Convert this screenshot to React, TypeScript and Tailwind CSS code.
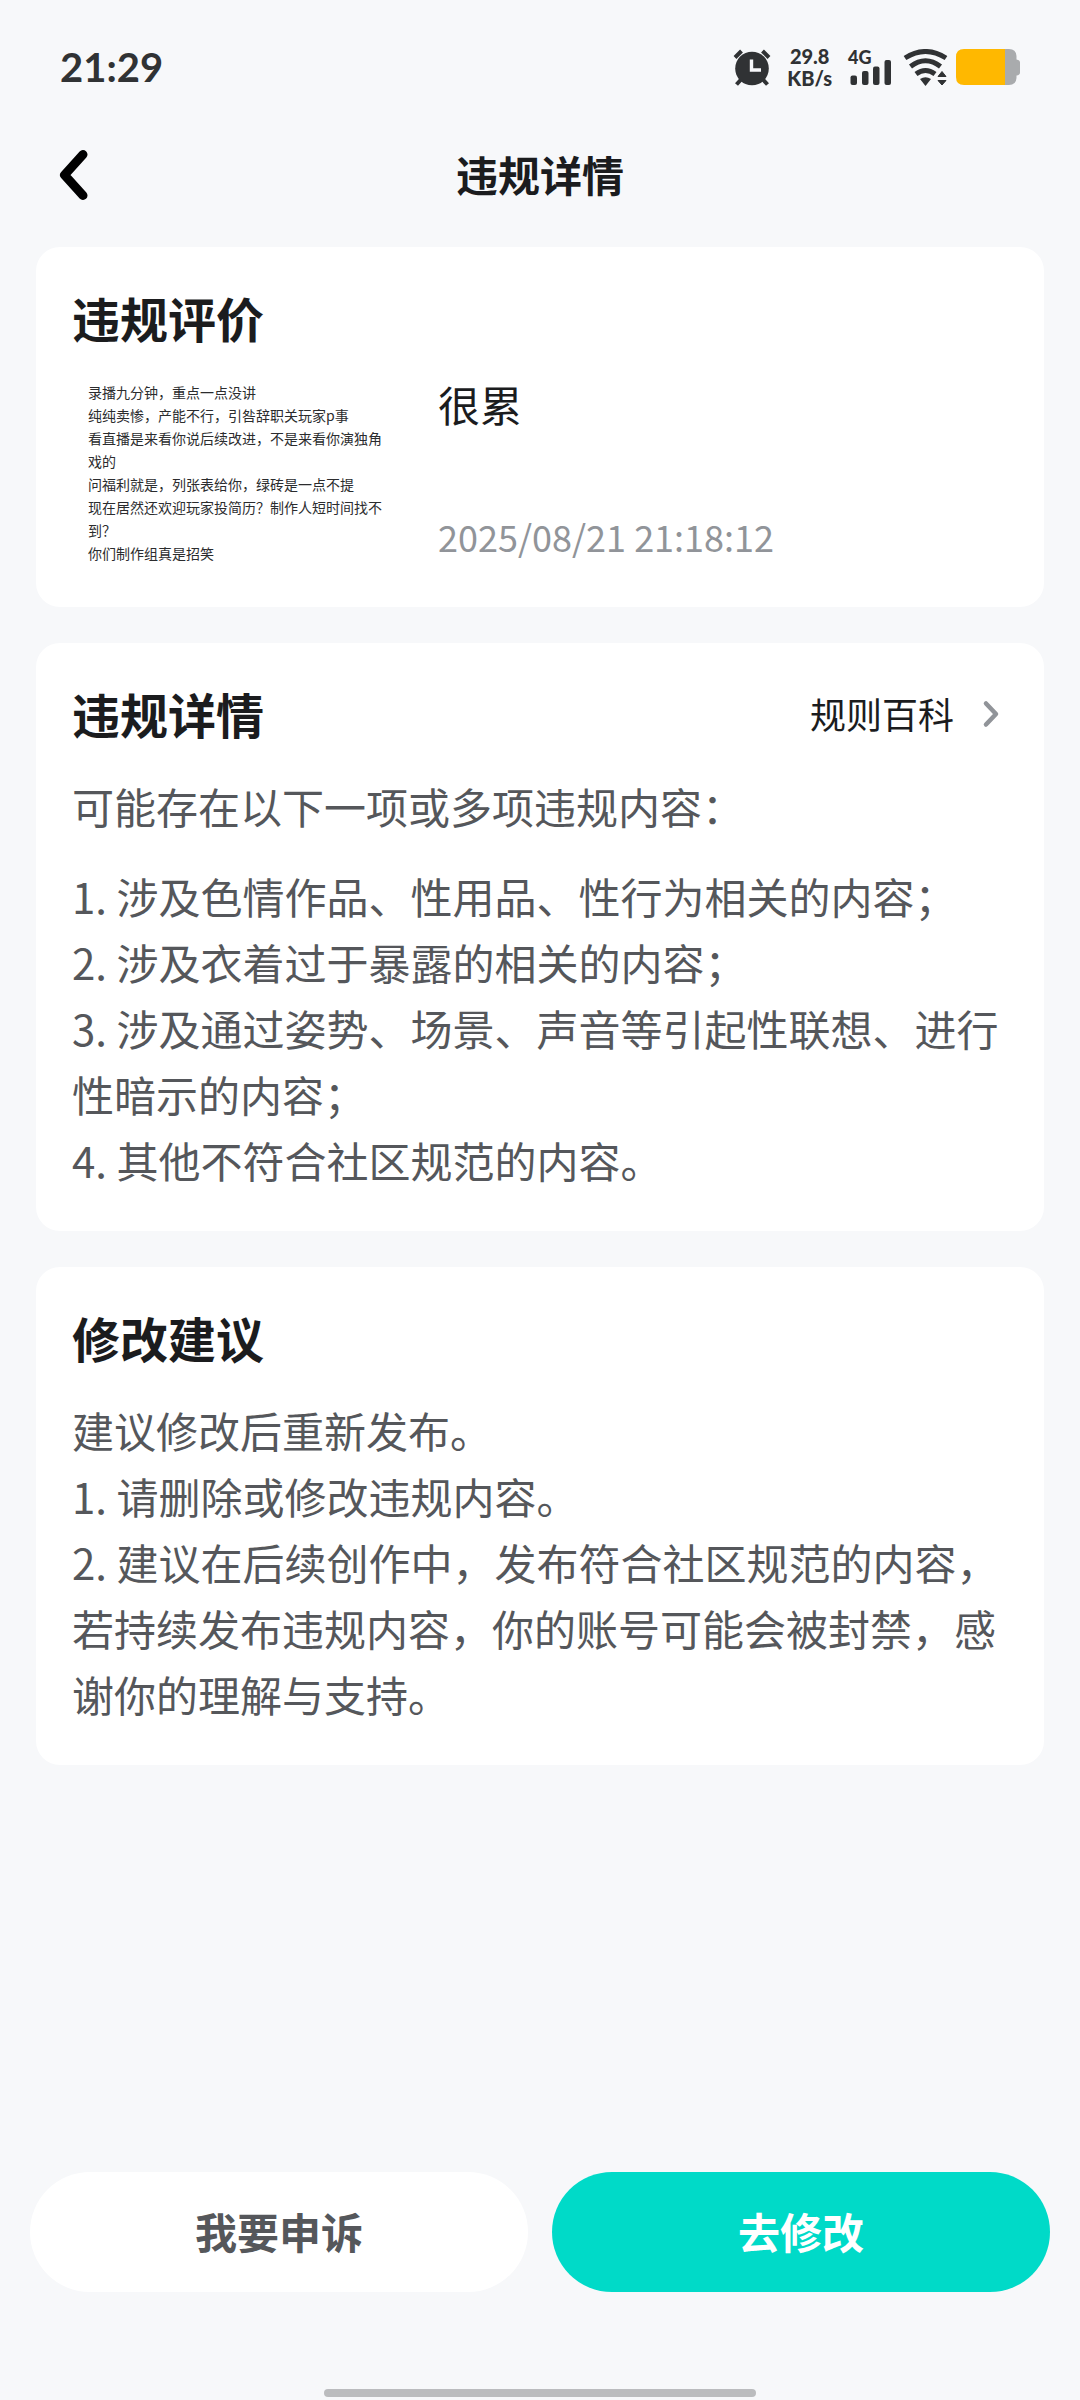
import type { ReactNode } from "react";

const reviewLines = [
  "录播九分钟，重点一点没讲",
  "纯纯卖惨，产能不行，引咎辞职关玩家p事",
  "看直播是来看你说后续改进，不是来看你演独角戏的",
  "问福利就是，列张表给你，绿砖是一点不提",
  "现在居然还欢迎玩家投简历？制作人短时间找不到？",
  "你们制作组真是招笑",
];

const violations = [
  "1. 涉及色情作品、性用品、性行为相关的内容；",
  "2. 涉及衣着过于暴露的相关的内容；",
  "3. 涉及通过姿势、场景、声音等引起性联想、进行性暗示的内容；",
  "4. 其他不符合社区规范的内容。",
];

const suggestions = [
  "建议修改后重新发布。",
  "1. 请删除或修改违规内容。",
  "2. 建议在后续创作中，发布符合社区规范的内容，若持续发布违规内容，你的账号可能会被封禁，感谢你的理解与支持。",
];

function AlarmIcon() {
  return (
    <svg className="w-[38px] h-[37px]" viewBox="0 0 38 37" fill="none" stroke="#303234">
      <path d="M2 8.500 8.500 2M36 8.500 29.500 2" strokeWidth="4" />
      <path d="M8.500 30 3.500 35.500M29.500 30l5 5.500" strokeWidth="4" />
      <circle cx="19" cy="19.500" r="16.800" fill="#303234" stroke="none" />
      <path d="M18.500 10.500v10.500H28" stroke="#f7f8fa" strokeWidth="3.400" />
    </svg>
  );
}

function SignalIcon() {
  return (
    <svg className="w-[43px] h-[37px]" viewBox="0 0 43 37" fill="#303234">
      <rect x="2.5" y="26.5" width="6.5" height="9.5" rx="2" />
      <rect x="14" y="22" width="6.5" height="14" rx="2" />
      <rect x="25" y="17.5" width="6.5" height="18.5" rx="2" />
      <rect x="36.5" y="11" width="6.5" height="25" rx="2" />
    </svg>
  );
}

function WifiIcon() {
  return (
    <svg className="w-[45px] h-[37px]" viewBox="0 0 45 37" fill="none" stroke="#303234">
      <path d="M2 9Q22.500-4 43 9" strokeWidth="5" />
      <path d="M7.500 17.500Q22.500 6 37.500 17.500" strokeWidth="5" />
      <path d="M13 25Q22.500 18 32 25" strokeWidth="5" />
      <path d="M17 30q5.500-3.500 11 0l-5.500 7z" fill="#303234" stroke="none" />
      <path d="M35 27.500 39 22.500l4 5zM35 31.500h8L39 36z" fill="#303234" strokeWidth="1" strokeLinejoin="round" />
    </svg>
  );
}

function BatteryIcon() {
  return (
    <svg className="w-[64px] h-[37px]" viewBox="0 0 64 37">
      <path d="M48 0h5q7 0 7.500 7v3.500q3.500.5 3.500 3v10q0 2.500-3.500 3V29q-.5 7-7.500 7h-5z" fill="#a9abad" />
      <path d="M49 0H8Q0 0 0 8v20q0 8 8 8h41z" fill="#ffb800" />
    </svg>
  );
}

function Card({ title, extra, children }: { title: string; extra?: ReactNode; children: ReactNode }) {
  return (
    <section className="bg-white rounded-3xl px-9 pt-[34px] pb-[38px]">
      <div className="flex items-center justify-between mb-6">
        <h2 className="text-5xl leading-[72px] font-bold text-[#1b1c1e]">{title}</h2>
        {extra}
      </div>
      {children}
    </section>
  );
}

export default function App() {
  return (
    <div className="min-h-screen flex flex-col bg-[#f7f8fa] font-['Noto_Sans_CJK_SC',sans-serif]">
      {/* Status bar */}
      <div className="flex items-center justify-between px-15 pt-9 text-[#303234]">
        <span className="font-['Lato','Noto_Sans_CJK_SC',sans-serif] text-[40px] leading-[62px] font-bold">21:29</span>
        <div className="flex items-center font-['Lato',sans-serif] font-black">
          <AlarmIcon />
          <div className="mx-4 text-xl leading-[22px] text-center">
            <div>29.8</div>
            <div>KB/s</div>
          </div>
          <div className="relative">
            <span className="absolute left-0 top-0 text-lg leading-4">4G</span>
            <SignalIcon />
          </div>
          <div className="flex gap-2 ml-3">
            <WifiIcon />
            <BatteryIcon />
          </div>
        </div>
      </div>

      {/* Header */}
      <header className="grid grid-cols-[1fr_auto_1fr] items-center px-14 pt-9 pb-[33px]">
        <button aria-label="返回" className="justify-self-start">
          <svg className="w-9 h-[52px]" viewBox="0 0 36 52" fill="none" stroke="#000" strokeWidth="9" strokeLinecap="round" strokeLinejoin="round">
            <path d="M27 6.500 8.500 27 27 47.500" />
          </svg>
        </button>
        <h1 className="text-[42px] leading-[80px] font-bold text-[#1b1c1e]">违规详情</h1>
      </header>

      <main className="flex flex-col gap-9 px-9">
        <Card title="违规评价">
          <div className="flex gap-9">
            <div className="w-[330px] h-48 px-4 shrink-0 flex flex-col justify-center text-sm leading-[23px] text-[#2b2c2e]">
              {reviewLines.map(line => <p key={line}>{line}</p>)}
            </div>
            <div className="flex-1 flex flex-col justify-between">
              <p className="text-[42px] leading-[54px] text-[#1b1c1e]">很累</p>
              <time className="text-4xl leading-[66px] text-[#919499]">2025/08/21 21:18:12</time>
            </div>
          </div>
        </Card>

        <Card
          title="违规详情"
          extra={
            <a href="#rules" className="flex items-center gap-6 text-4xl text-[#1b1c1e]">
              规则百科
              <svg className="w-[30px] h-9" viewBox="0 0 30 36" fill="none" stroke="#919499" strokeWidth="4.500" strokeLinecap="round" strokeLinejoin="round">
                <path d="M8 8.500l10 10.500L8 29.500" />
              </svg>
            </a>
          }
        >
          <div className="text-[42px] leading-[66px] text-[#55575b]">
            <p className="mb-6">可能存在以下一项或多项违规内容：</p>
            {violations.map(v => <p key={v}>{v}</p>)}
          </div>
        </Card>

        <Card title="修改建议">
          <div className="text-[42px] leading-[66px] text-[#55575b]">
            {suggestions.map(s => <p key={s}>{s}</p>)}
          </div>
        </Card>
      </main>

      {/* Bottom actions */}
      <footer className="mt-auto pt-9">
        <div className="grid grid-cols-2 gap-6 px-[30px]">
          <button className="h-[120px] pb-1 rounded-full bg-white text-[42px] font-bold text-[#55575b]">我要申诉</button>
          <button className="h-[120px] pb-1 rounded-full bg-[#00dac8] text-[42px] font-bold text-white">去修改</button>
        </div>
        <div className="w-2/5 h-2 mx-auto mt-[97px] mb-[3px] rounded-full bg-[#bbbcbe]" />
      </footer>
    </div>
  );
}
